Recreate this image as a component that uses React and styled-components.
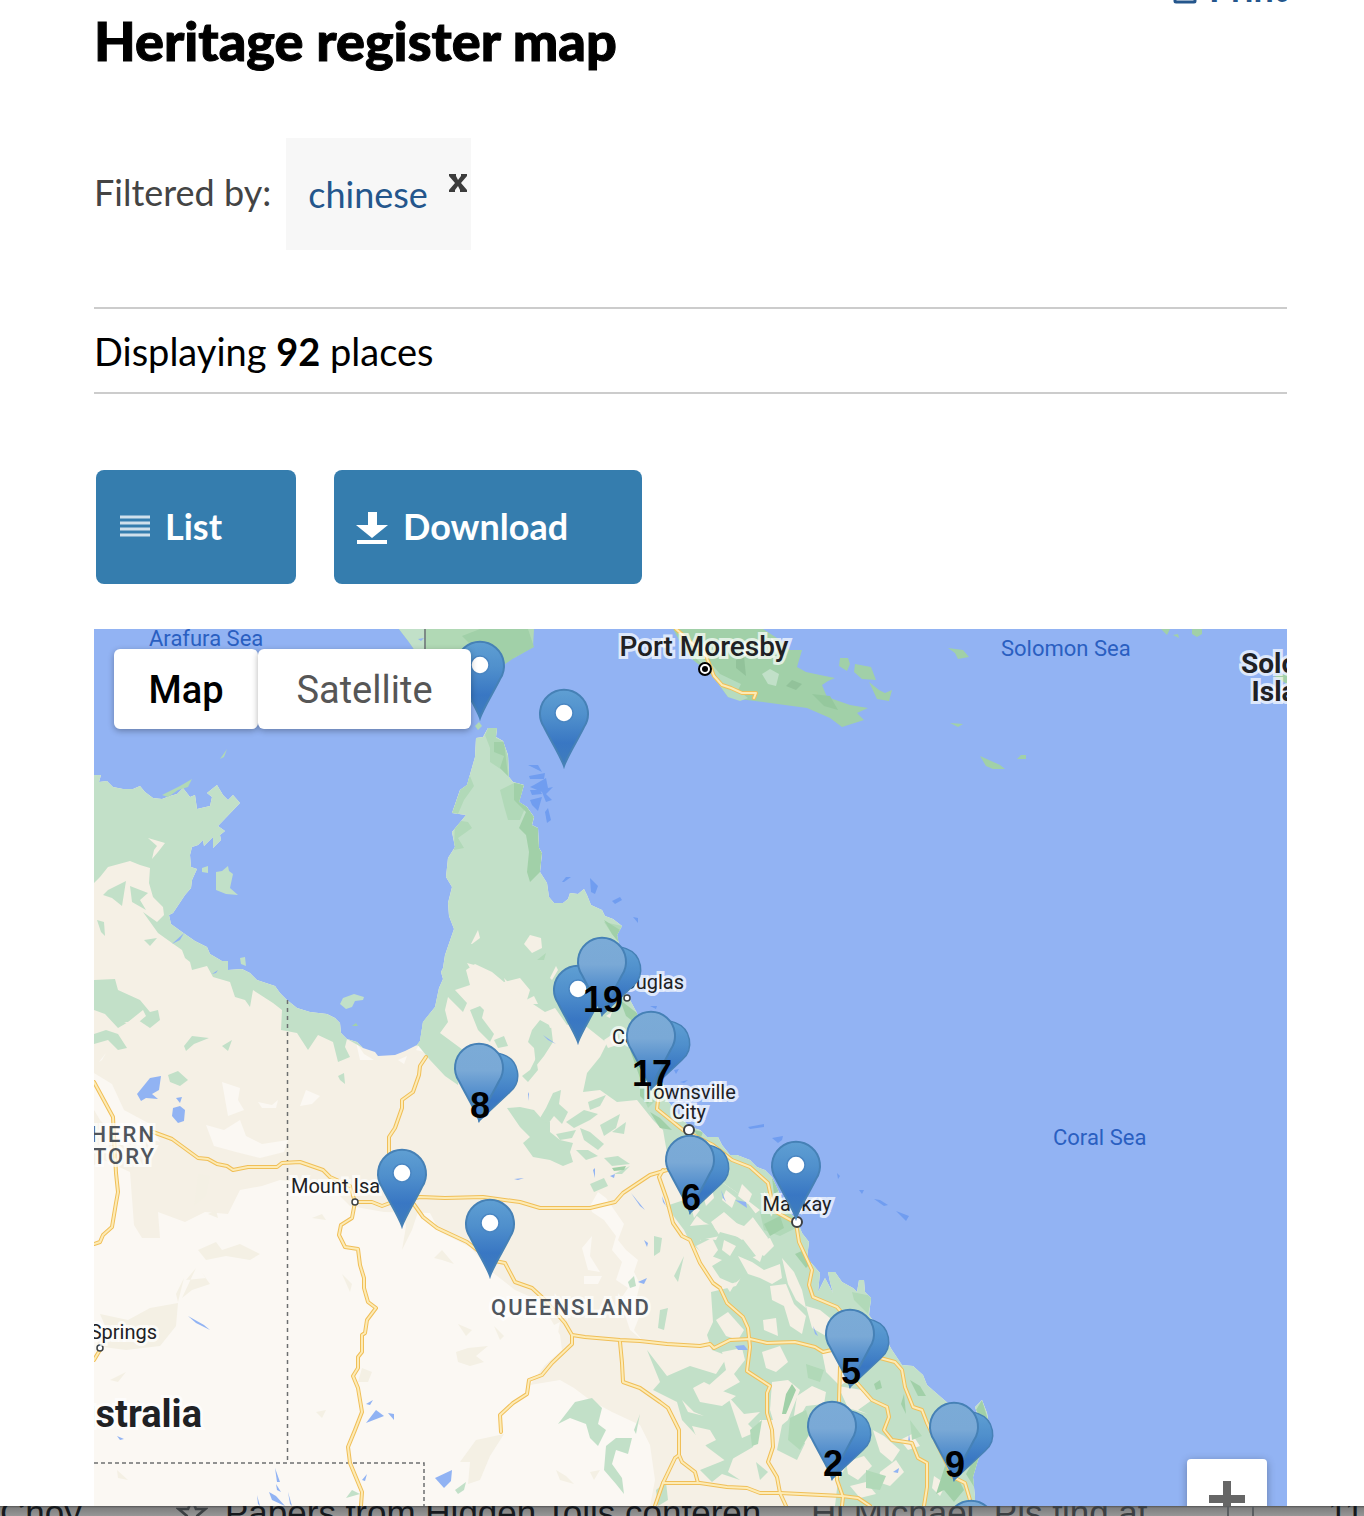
import React, { useState } from "react";
import styled, { createGlobalStyle, css } from "styled-components";

// map data, all in map canvas units

const coast =
  "94,775 101,775 99,782 107,781 113,787 123,789 133,789 140,786 145,792 153,798 162,799 170,796 177,794 183,788 190,797 195,795 197,809 210,806 212,797 207,793 217,785 223,795 228,800 233,795 240,803 218,826 225,831 220,835 221,840 213,848 213,837 204,846 203,840 198,845 192,847 190,855 191,867 197,869 192,880 191,888 185,895 173,913 169,915 171,924 182,932 195,941 207,947 210,954 222,961 228,961 228,970 242,969 250,973 257,980 275,986 280,993 287,1000 297,1008 310,1012 327,1014 335,1018 340,1023 341,1033 347,1039 357,1042 363,1048 375,1052 378,1056 395,1055 405,1051 417,1045 420,1041 423,1022 435,1007 439,988 443,979 441,972 443,968 445,955 454,929 449,916 448,903 452,887 446,877 448,858 455,847 452,832 462,820 466,815 452,813 460,790 467,785 475,757 476,738 483,737 488,728 497,728 496,737 503,741 508,755 509,777 513,782 524,785 519,802 527,807 534,817 532,825 538,828 539,848 542,853 540,872 547,883 549,897 554,903 563,903 568,899 570,893 578,894 584,889 587,895 591,905 602,910 605,916 613,919 622,926 617,935 620,950 630,965 632,980 624,990 630,1000 637,1013 640,1030 645,1060 655,1080 663,1083 667,1100 680,1117 690,1127 700,1130 707,1137 718,1137 722,1145 730,1155 737,1155 750,1160 757,1167 765,1170 772,1177 778,1190 787,1210 797,1220 802,1233 809,1242 807,1258 820,1273 818,1292 825,1278 833,1293 830,1282 828,1272 835,1272 842,1282 853,1288 857,1292 859,1280 864,1280 865,1292 871,1298 869,1315 880,1330 892,1350 902,1365 913,1366 923,1375 927,1385 950,1405 965,1415 977,1413 975,1407 982,1400 987,1413 990,1430 978,1460 973,1477 975,1497 975,1506 94,1506";

const lightLand = [
  "94,1165 104,1160 130,1172 134,1225 142,1238 160,1238 158,1212 185,1222 205,1212 228,1214 240,1190 262,1186 280,1180 330,1186 350,1206 384,1212 430,1213 440,1232 470,1247 492,1272 515,1290 540,1301 560,1335 562,1350 545,1365 530,1385 560,1380 574,1388 590,1400 612,1412 640,1425 650,1445 655,1480 650,1506 94,1506",
  "94,1073 112,1084 124,1110 150,1124 160,1142 140,1136 124,1146 100,1120 94,1110",
  "222,1082 240,1088 238,1100 244,1110 228,1116",
  "258,1102 272,1105 278,1100 276,1108 262,1108",
  "306,1090 320,1096 312,1104 300,1106",
  "590,1206 598,1192 606,1198 624,1224 618,1240 626,1250 638,1260 634,1272 640,1284 636,1300 642,1310 634,1330 642,1340 630,1330 620,1300 628,1288 616,1280 622,1262 612,1250 616,1236 604,1220 592,1212",
  "582,1248 592,1236 590,1256 600,1272 588,1270",
  "584,1276 602,1276 598,1284 584,1284",
  "544,1330 560,1322 556,1344 540,1350 522,1352",
  "206,1125 224,1130 240,1120 246,1136 262,1144 288,1140 284,1152 260,1158 236,1152 214,1146",
  "99,1062 106,1053 102,1060",
  "356,1042 364,1054 374,1060 360,1060",
  "398,1060 407,1056 404,1064",
  "416,1050 428,1030 424,1052",
];

const beigeOnLight = [
  "100,1314 128,1320 150,1308 178,1303 176,1326 160,1346 126,1350 96,1346 106,1328",
  "198,1250 216,1242 222,1250 240,1244 260,1254 250,1260 226,1256 206,1260",
  "186,1280 206,1278 200,1270 210,1284 192,1290 182,1298 196,1268",
  "176,1294 184,1278 178,1302",
  "456,1352 468,1348 488,1346 476,1356 484,1362 470,1366 458,1362",
  "458,1324 472,1330 466,1336",
  "494,1326 504,1336 500,1340",
  "476,1440 504,1434 490,1456 480,1480 468,1484 470,1462 460,1462",
  "434,1258 442,1250 454,1264 442,1260",
  "362,1368 372,1372 368,1382 358,1382",
  "400,1200 420,1206 412,1230 402,1250 406,1226",
  "110,1380 126,1372 118,1382",
  "316,1412 326,1410 322,1418",
  "117,1470 128,1480 118,1478",
  "342,1274 352,1284 350,1292",
  "556,1470 566,1476 574,1484 560,1480",
  "590,1472 600,1470 594,1480",
  "312,1218 322,1214 326,1220",
  "198,1174 210,1176 206,1196 194,1206",
  "208,1214 216,1210 218,1218",
];

const forest = [
  "94,770 245,770 245,780 430,780 430,1045 363,1048 347,1039 345,1047 350,1057 338,1062 333,1042 318,1035 308,1050 297,1033 281,1030 282,1010 273,1003 253,990 250,1007 245,1000 235,997 230,982 213,977 207,966 192,970 190,962 185,958 182,950 172,943 158,933 143,912 157,922 164,915 163,907 153,897 149,883 150,868 140,865 130,861 108,867 100,877 94,883",
  "417,1044 430,1060 445,1076 458,1085 463,1050 440,1033 448,1022 445,1010 448,997 463,1012 467,1003 455,990 470,985 466,970 475,964 492,972 504,982 520,978 530,990 527,1000 545,1012 555,1008 567,1025 578,1020 607,1043 600,1057 587,1073 583,1092 600,1090 617,1102 637,1100 653,1120 663,1130 667,1153 690,1170 722,1182 742,1196 760,1210 752,1216 768,1238 760,1262 745,1252 730,1268 742,1276 736,1286 711,1292 713,1322 707,1335 712,1350 728,1356 716,1374 690,1366 667,1376 647,1350 660,1382 653,1390 677,1402 682,1420 707,1447 727,1462 753,1447 760,1420 783,1420 777,1450 797,1460 810,1433 840,1420 850,1460 838,1480 835,1506 1010,1506 1010,1380 700,900 560,700 440,700 430,900",
  "94,980 115,979 118,990 140,1000 150,1012 158,1010 160,1020 150,1028 135,1018 118,1028 105,1014 94,1010",
  "94,1034 106,1030 118,1034 127,1048 118,1050 108,1040 94,1044",
  "184,1046 192,1036 209,1038 194,1044 186,1051",
  "222,1046 232,1040 228,1051",
  "168,1075 178,1071 188,1080 180,1086 170,1082",
  "108,890 126,881 122,906 112,898 103,895",
  "130,886 148,893 140,900 146,910 132,902",
  "144,940 157,938 150,946",
  "97,920 104,922 105,936 101,932",
  "470,1010 480,1006 484,1010 482,1018 494,1034 490,1042 478,1030",
  "532,1030 540,1020 551,1026 553,1042 544,1056 536,1066 534,1048 528,1042",
  "522,1076 530,1070 536,1058 538,1070 528,1082",
  "507,1108 520,1107 534,1110 541,1118 550,1122 550,1132 560,1140 573,1143 570,1152 573,1162 563,1166 550,1160 533,1157 523,1143 530,1137 520,1127",
  "494,1040 504,1036 508,1046 498,1048",
  "546,1108 553,1093 561,1090 559,1104 568,1112 562,1124 554,1116 548,1124 540,1118",
  "566,1122 584,1110 598,1114 590,1120 574,1128",
  "588,1102 606,1095 600,1106 590,1110",
  "556,1134 576,1130 572,1138 560,1140",
  "580,1128 590,1132 604,1144 598,1150 584,1140",
  "600,1125 620,1114 616,1128 604,1136",
  "612,1132 626,1122 624,1134",
  "576,1150 588,1150 598,1156 586,1160",
  "604,1158 618,1156 630,1164 612,1166",
  "590,1184 604,1178 608,1186 594,1192",
  "614,1174 630,1166 622,1174",
  "666,1206 684,1200 698,1214 690,1226 712,1224 720,1236 700,1240 716,1252 706,1256 690,1242 684,1230",
  "698,1182 716,1178 742,1196 756,1214 744,1226 728,1220 716,1228 704,1222 690,1210 700,1200",
  "700,1238 716,1240 720,1232 742,1238 756,1256 740,1262 744,1276 734,1284 720,1278 712,1266 722,1260 706,1254",
  "654,1236 662,1238 660,1252 654,1256",
  "674,1276 684,1256 678,1282",
  "660,1310 668,1308 664,1330 658,1328",
  "628,1282 634,1276 636,1286 630,1288",
  "558,1424 575,1402 592,1398 602,1408 598,1424 606,1430 598,1446 590,1438 586,1424 570,1418",
  "606,1446 616,1438 632,1438 628,1454 616,1450 612,1464 622,1478 624,1494 616,1484 604,1470",
  "634,1430 640,1414 636,1434",
  "455,1490 466,1482 464,1490 458,1494",
  "346,1498 352,1490 360,1494",
  "656,1490 666,1482 668,1500 658,1506",
  "700,1470 720,1462 734,1456 728,1472 740,1480 722,1474 712,1482",
  "756,1462 768,1472 760,1480",
  "338,1076 344,1073 345,1084 340,1080",
];

// clearings inside the forest
const clearings = [
  "471,944 478,930 480,938 472,944",
  "524,944 530,935 541,938 542,948 532,953",
  "550,978 556,966 558,970 552,980",
  "467,963 478,966 488,976 498,982 488,988 476,978",
  "504,978 516,990 526,1000 534,996 538,1004 520,1004 508,990",
  "548,1022 556,1018 558,1026 550,1028",
  "148,838 165,843 158,852 152,859 154,850 157,846",
  "128,1022 143,1010 146,1016 134,1026 124,1022",
  "604,1040 616,1032 620,1044 608,1048",
  "606,1016 612,1012 610,1018",
  "711,1222 724,1212 740,1226 750,1234 742,1240 730,1232 716,1230",
  "696,1246 712,1238 718,1250 712,1258 704,1256",
  "756,1242 770,1238 774,1246 764,1256 756,1252",
  "738,1256 752,1262 764,1270 780,1264 782,1278 772,1284 760,1278 748,1274",
  "782,1258 794,1272 802,1290 806,1308 796,1300 788,1284",
  "770,1286 786,1284 794,1304 806,1316 802,1334 790,1326 784,1306 772,1300",
  "763,1320 776,1318 778,1336 764,1330",
  "716,1320 728,1312 744,1330 738,1340 726,1336",
  "722,1352 742,1348 745,1360 734,1374 740,1382 722,1392 708,1386 726,1370",
  "762,1352 780,1346 788,1362 776,1372 766,1368",
  "693,1388 704,1382 720,1390 736,1396 722,1406 700,1402",
  "682,1400 694,1412 704,1416 688,1412",
  "772,1382 788,1380 800,1390 788,1420 776,1430 770,1410",
  "797,1396 812,1386 826,1392 824,1404 806,1406 798,1420 792,1428",
  "692,1426 710,1430 716,1440 704,1446 696,1436",
  "728,1396 744,1414 760,1412 748,1424 756,1432 742,1438",
  "822,1352 834,1350 842,1366 848,1380 840,1386 826,1372",
  "838,1386 862,1390 872,1400 858,1410 868,1414 848,1408",
  "800,1420 816,1414 826,1430 810,1446 800,1440",
  "806,1306 820,1310 830,1318 826,1336 812,1328",
  "846,1462 864,1456 872,1466 858,1480 848,1474",
  "873,1430 884,1436 900,1450 892,1462 880,1452",
  "880,1472 896,1460 904,1472 890,1486 878,1482",
  "850,1486 866,1482 876,1494 860,1498",
  "742,1184 752,1194 748,1204 738,1196",
  "764,1192 772,1200 766,1208",
  "726,1190 736,1198 732,1208 722,1200",
  "702,1192 712,1188 714,1198 706,1206",
  "690,1202 700,1210 694,1218",
  "724,1240 736,1246 730,1256 722,1250",
  "726,1286 736,1282 730,1292",
  "790,1300 796,1312 790,1316",
  "900,1440 912,1434 920,1446 908,1450",
  "934,1476 946,1484 940,1496 932,1488",
  "454,1024 466,1018 470,1026 460,1032",
];

const denseForest = [
  "485,735 488,728 497,728 496,738 504,742 508,758 509,777 502,770 490,762 490,748",
  "452,813 462,785 470,776 474,786 464,800 458,814",
  "455,820 468,822 472,828 458,838 464,848 454,850",
  "500,790 520,780 526,806 520,820 508,820 504,806",
  "604,922 622,926 617,940 612,934",
  "537,960 546,953 544,960 534,960",
  "640,1090 656,1084 660,1096 648,1108",
  "760,1212 790,1208 800,1226 780,1236 764,1230",
  "806,1364 824,1370 820,1382 808,1378",
  "790,1418 806,1410 812,1430 800,1450 788,1440",
  "866,1470 886,1476 880,1490 866,1488",
  "750,1430 762,1420 758,1444 752,1446",
  "910,1420 922,1436 912,1440",
  "852,1292 872,1296 868,1314 854,1300",
];

const parks = [
  "514,783 524,785 520,802 527,807 534,817 532,825 538,828 539,848 542,853 540,872 530,882 527,872 529,852 526,835 519,828 526,812 514,800",
  "494,742 504,742 508,776 500,768 504,756 494,752",
  "604,920 612,934 620,944 620,930",
  "620,1000 637,1013 644,1030 626,1016",
  "630,1050 645,1062 656,1088 648,1104 640,1096 640,1078",
  "650,1112 660,1118 672,1130 660,1128",
  "694,1130 703,1132 700,1140",
  "612,1168 626,1166 624,1170 614,1171",
  "772,1178 780,1190 774,1194",
  "764,1224 780,1216 784,1228 770,1236",
  "795,1254 804,1250 812,1262 806,1268",
  "786,1394 792,1384 796,1390 786,1414 782,1414",
  "874,1384 880,1380 882,1388 876,1390",
  "901,1404 904,1394 906,1414",
  "910,1380 920,1386 926,1396 918,1396",
  "945,1466 956,1474 964,1490 954,1502 944,1490 936,1494",
  "976,1410 982,1400 988,1420 980,1416",
  "978,1452 990,1446 976,1490 966,1474",
];

const islands = [
  { c: "#b1d9b5", p: "399,629 534,629 533,647 514,658 470,664 418,655 409,642" },
  { c: "#c1e0c8", p: "399,629 424,629 424,656 418,655 409,642" },
  { c: "#a1d0a8", p: "480,629 528,629 534,647 514,658 505,664 498,650 470,644 462,636" },
  { c: "#a1d0a8", p: "673,629 763,629 780,640 790,650 802,650 797,667 806,672 820,675 835,678 828,681 822,685 827,697 850,705 868,708 857,713 864,720 842,727 830,718 807,708 763,702 747,700 728,697 712,675 693,660 683,647" },
  { c: "#b6dcbf", p: "693,655 710,662 720,674 741,684 738,690 748,698 740,701 728,697 712,675" },
  { c: "#c1e0c8", p: "762,674 770,669 779,674 776,686 768,684" },
  { c: "#92c29a", p: "786,686 792,680 802,684 796,690" },
  { c: "#92c29a", p: "736,660 744,656 746,676 736,668" },
  { c: "#95c89d", p: "812,694 830,696 838,710 824,706" },
  { c: "#a1d0a8", p: "840,658 848,658 850,664 847,671 839,666" },
  { c: "#a1d0a8", p: "855,664 871,667 876,680 862,679 854,672" },
  { c: "#a1d0a8", p: "869,682 879,690 885,693 892,690 889,701 877,699" },
  { c: "#a1d0a8", p: "948,648 963,650 969,657 958,659 955,653" },
  { c: "#a1d0a8", p: "980,756 1000,765 1005,769 993,769 986,766" },
  { c: "#a1d0a8", p: "1017,759 1021,755 1026,755 1026,759" },
  { c: "#a1d0a8", p: "950,723 963,724 958,727" },
  { c: "#a1d0a8", p: "1161,629 1170,629 1167,635" },
  { c: "#a1d0a8", p: "1173,635 1178,634 1179,638" },
  { c: "#a1d0a8", p: "1192,629 1202,629 1202,634 1197,637 1192,634" },
  { c: "#a1d0a8", p: "1274,676 1287,674 1287,684" },
  { c: "#b1d9b5", p: "220,759 227,749 224,757" },
  { c: "#b1d9b5", p: "162,795 180,786 192,779 188,787 178,790 168,797" },
  { c: "#c1e0c8", p: "216,872 222,871 228,866 229,871 233,874 230,888 238,895 226,894 216,890" },
  { c: "#c1e0c8", p: "202,868 208,866 208,873 202,872" },
  { c: "#c1e0c8", p: "340,1004 343,998 354,994 364,997 363,1000 355,1001 352,1007 346,1009" },
  { c: "#c1e0c8", p: "240,958 245,957 246,966 241,964" },
  { c: "#a1d0a8", p: "352,1026 356,1023 358,1026" },
  { c: "#b1d9b5", p: "475,726 479,722 482,726 478,730" },
];

const lakes = [
  "137,1094 150,1078 161,1076 159,1090 152,1094 158,1099 146,1098 141,1101",
  "173,1108 180,1106 185,1110 184,1121 178,1123 172,1116",
  "176,1098 182,1097 180,1103",
  "188,1316 204,1325 210,1330 196,1323",
  "117,1436 124,1439 120,1440",
  "140,1442 150,1452 146,1448",
  "366,1423 376,1410 384,1416",
  "366,1404 373,1400 370,1405",
  "388,1413 394,1414 394,1420",
  "275,1468 280,1482 277,1482",
  "276,1484 281,1492 277,1490",
  "269,1492 276,1496 285,1506 272,1500",
  "288,1492 292,1506 290,1504",
  "257,1495 260,1506 258,1504",
  "362,1480 367,1474 365,1481",
  "435,1478 452,1470 451,1481 444,1488",
  "172,944 184,933 180,940",
  "212,974 218,970 216,973",
  "514,1179 524,1178 518,1180",
  "528,1094 529,1092 529,1101",
  "543,1035 556,1044 548,1040",
  "631,1193 645,1210 640,1206",
  "593,1170 595,1168 595,1178",
  "610,1176 615,1174 614,1178",
  "644,1240 648,1243 647,1247",
  "638,1282 647,1278 644,1284",
  "735,1346 744,1345 748,1350 738,1350",
  "813,1326 818,1336 815,1334",
  "662,1196 666,1206 663,1202",
  "721,1190 726,1202 723,1198",
  "735,1200 746,1202 747,1208",
  "893,1472 899,1468 898,1473",
  "909,1434 911,1446 908,1442",
  "418,639 424,638 421,641",
];

const reefs = [
  "528,765 538,765 542,772",
  "529,776 540,774 545,773 544,779 530,779",
  "534,785 546,778 548,788 553,787 546,794 552,800 546,802 542,792 530,787",
  "530,790 540,790 542,794 532,795",
  "530,800 542,797 540,804 538,811 532,805",
  "545,812 548,808 551,820 547,823",
  "562,882 566,877 571,877 564,882",
  "590,878 598,886 595,894 591,892",
  "612,901 620,897 622,900 615,904",
  "633,917 638,918 638,923",
  "650,1006 657,1006 656,1009",
  "748,1127 764,1124 764,1127 750,1129",
  "772,1138 783,1136 782,1140 778,1143",
  "837,1173 840,1176 838,1179",
  "859,1190 864,1190 862,1194",
  "874,1199 880,1200 888,1205 884,1206",
  "896,1211 909,1216 906,1221",
  "674,1070 679,1069 676,1074",
  "680,1082 688,1080 684,1083",
];

const roads = [
  "426,1057 420,1066 419,1075 413,1092 402,1100 402,1108 395,1128 389,1137 389,1170 396,1200",
  "94,1082 113,1117 114,1137 116,1173 118,1192 116,1203 112,1227 103,1235 100,1242 94,1244",
  "153,1132 172,1139 198,1158 208,1159 217,1164 227,1166 233,1170 248,1167 277,1167 282,1163 300,1162 323,1170 330,1177 350,1186 355,1202 372,1202 382,1206 390,1203 420,1197 445,1198 483,1197 520,1202 540,1208 590,1208 615,1202 623,1193 650,1175 667,1170",
  "355,1202 352,1218 341,1225 339,1235 345,1247 358,1249 360,1265 364,1278 364,1288 368,1302 376,1308 367,1320 365,1333 362,1335 362,1352 358,1357 358,1368 353,1376 358,1388 362,1412 355,1430 348,1447 350,1463 362,1492 361,1506",
  "413,1203 423,1217 437,1228 467,1242 490,1260 505,1263 515,1282 532,1288 545,1300 565,1323 572,1335 585,1337 620,1340 640,1341 667,1344 700,1346 710,1344 714,1348 730,1340 750,1339 767,1343 795,1342 815,1347 823,1352 836,1349",
  "572,1335 572,1344 552,1363 542,1375 529,1380 527,1394 513,1403 500,1415 501,1432",
  "620,1342 622,1363 623,1382 640,1388 660,1402 668,1408 679,1430 679,1455 682,1462 695,1472 698,1483",
  "679,1455 675,1458 663,1483 655,1506",
  "663,1483 700,1483 727,1487 747,1488 760,1493 780,1493 842,1496 858,1498 870,1506",
  "663,1170 659,1177 667,1200 673,1223 682,1236 690,1240 700,1263 713,1283 720,1288 727,1303 743,1317 748,1328 750,1347 747,1371 770,1386 767,1393 767,1413 772,1430 773,1447 768,1462 777,1477 780,1493 786,1506",
  "663,1090 658,1100 657,1109 683,1130 713,1145 732,1160 750,1167 768,1183 771,1197 776,1212 787,1218 796,1223 799,1242 812,1270 809,1285 813,1297 837,1307 880,1358 895,1362 902,1370 905,1387 913,1407 922,1410 927,1423 953,1477 965,1483 970,1500",
  "840,1367 839,1400 837,1480 843,1497 842,1506",
  "857,1383 872,1400 887,1407 889,1417 884,1430 892,1440 912,1443 918,1458 927,1463 927,1487 924,1506",
  "676,629 684,636 706,656 714,676 722,685 731,688 742,693 756,693 754,698",
  "94,1360 100,1350",
];

const towns = [
  { x: 355, y: 1202, r: 3 },
  { x: 100, y: 1348, r: 3 },
  { x: 627, y: 998, r: 3 },
  { x: 689, y: 1130, r: 5 },
  { x: 797, y: 1222, r: 5 },
];

const labels = [
  { x: 149, y: 639, kind: "sea", text: "Arafura Sea" },
  { x: 1001, y: 649, kind: "sea", text: "Solomon Sea" },
  { x: 1053, y: 1138, kind: "sea", text: "Coral Sea" },
  { x: 704, y: 647, kind: "capital", text: "Port Moresby", align: "center" },
  { x: 1297, y: 678, kind: "country", text: "Solomon\nIslands", align: "center" },
  { x: 202, y: 1414, kind: "nation", text: "Australia", align: "end" },
  { x: 156, y: 1146, kind: "state", text: "NORTHERN\nTERRITORY", align: "end" },
  { x: 491, y: 1308, kind: "state", text: "QUEENSLAND" },
  { x: 684, y: 982, kind: "town", text: "Port Douglas", align: "end" },
  { x: 612, y: 1037, kind: "town", text: "Cairns" },
  { x: 689, y: 1102, kind: "town", text: "Townsville\nCity", align: "center" },
  { x: 797, y: 1204, kind: "town", text: "Mackay", align: "center" },
  { x: 291, y: 1186, kind: "town", text: "Mount Isa" },
  { x: 157, y: 1332, kind: "town", text: "Alice Springs", align: "end" },
];

const places = [
  { x: 480, y: 640 },
  { x: 564, y: 688 },
  { x: 578, y: 964 },
  { x: 602, y: 936, cluster: true, count: 19 },
  { x: 651, y: 1010, cluster: true, count: 17 },
  { x: 479, y: 1042, cluster: true, count: 8 },
  { x: 402, y: 1148 },
  { x: 490, y: 1198 },
  { x: 690, y: 1134, cluster: true, count: 6 },
  { x: 796, y: 1140 },
  { x: 850, y: 1308, cluster: true, count: 5 },
  { x: 832, y: 1400, cluster: true, count: 2 },
  { x: 954, y: 1401, cluster: true, count: 9 },
  { x: 971, y: 1499, cluster: true },
];

const Shapes = ({ list, fill }) => (
  <g fill={fill}>
    {list.map((points, index) => (
      <polygon key={index} points={points} />
    ))}
  </g>
);

const Terrain = () => (
  <Canvas viewBox="94 629 1193 877" aria-hidden="true">
    <clipPath id="land">
      <polygon points={coast} />
    </clipPath>
    <polygon points={coast} fill="#f5f0e5" />
    <g clipPath="url(#land)">
      <Shapes list={lightLand} fill="#fbf8f3" />
      <Shapes list={beigeOnLight} fill="#f4f0e4" />
      <Shapes list={forest} fill="#c2e0c8" />
      <Shapes list={clearings} fill="#f5f0e5" />
      <Shapes list={denseForest} fill="#b1d9b8" />
      <Shapes list={parks} fill="#a1d0a8" />
    </g>
    {islands.map((island, index) => (
      <polygon key={index} points={island.p} fill={island.c} />
    ))}
    <Shapes list={lakes} fill="#91b3f3" />
    <Shapes list={reefs} fill="#709df0" />

    {/* borders */}
    <path d="M425 629V660" stroke="#7d8a86" strokeWidth="2" />
    <g fill="none" stroke="#6d6f70">
      <path d="M287.500 1000V1463" strokeDasharray="4 4" strokeWidth="1.500" />
      <path d="M94 1463H424V1506" strokeDasharray="4 3" strokeWidth="1.500" />
    </g>

    <g fill="none" strokeLinejoin="round" strokeLinecap="round">
      {roads.map((points) => (
        <polyline key={points} points={points} stroke="#f0bf58" strokeWidth="4" />
      ))}
      {roads.map((points) => (
        <polyline key={points} points={points} stroke="#fdebb5" strokeWidth="2" />
      ))}
    </g>

    {towns.map((town) => (
      <circle
        key={town.x}
        cx={town.x}
        cy={town.y}
        r={town.r}
        fill="#fff"
        stroke="#3c4043"
        strokeWidth={town.r > 3 ? 2 : 1.5}
      />
    ))}
    <circle cx="705" cy="669" r="6" fill="#fff" stroke="#000" strokeWidth="2" />
    <circle cx="705" cy="669" r="3" />
  </Canvas>
);

const PinArt = ({ cluster }) => (
  <svg width="68" height="82" viewBox="0 0 68 82" aria-hidden="true">
    <defs>
      <linearGradient id="pin" x1="0" y1="0" x2="0" y2="1">
        <stop offset="0" stopColor="#5f9fd3" />
        <stop offset="0.350" stopColor="#4f8fcc" />
        <stop offset="0.700" stopColor="#3977c3" />
        <stop offset="1" stopColor="#3f7dbd" />
      </linearGradient>
      <linearGradient id="cluster" x1="0" y1="0" x2="0" y2="1">
        <stop offset="0" stopColor="#7babd7" />
        <stop offset="0.350" stopColor="#7aa9d6" />
        <stop offset="0.700" stopColor="#4d8acb" />
        <stop offset="1" stopColor="#3a78c2" />
      </linearGradient>
    </defs>
    {cluster && (
      <path
        d="M25 79L56 50A22 22 0 1 0 20 37Z"
        fill="url(#pin)"
        stroke="#4681b6"
        strokeWidth="1.500"
      />
    )}
    <path
      d="M25 79C22 70 12 54 5 40A24 24 0 1 1 45 40C38 54 28 70 25 79Z"
      transform="translate(0 -1)"
      fill={cluster ? "url(#cluster)" : "url(#pin)"}
      stroke="#4681b6"
      strokeWidth="2"
    />
    {!cluster && (
      <circle cx="25" cy="25" r="9" fill="#fff" stroke="#4a86c2" strokeWidth="1.500" />
    )}
  </svg>
);

const HeritageMap = () => {
  const [type, setType] = useState("Map");

  return (
    <MapFrame>
      <Terrain />
      {labels.map((label) => (
        <Label key={label.text} $x={label.x} $y={label.y} $kind={label.kind} $align={label.align}>
          {label.text}
        </Label>
      ))}
      {places.map((place) => (
        <Pin key={place.x} $x={place.x} $y={place.y}>
          <PinArt cluster={place.cluster} />
          {place.count && <Count>{place.count}</Count>}
        </Pin>
      ))}
      <MapTypes>
        {["Map", "Satellite"].map((name) => (
          <MapType key={name} $active={type === name} onClick={() => setType(name)}>
            {name}
          </MapType>
        ))}
      </MapTypes>
      <ZoomIn aria-label="Zoom in">
        <svg width="36" height="36" viewBox="0 0 36 36">
          <path d="M18 0V36M0 18H36" stroke="#666" strokeWidth="8" />
        </svg>
      </ZoomIn>
    </MapFrame>
  );
};

const App = () => {
  return (
    <>
      <GlobalStyle />
      <Page>
        <PrintBar>
          <PrintLink href="#print">
            <svg width="24" height="24" viewBox="0 0 24 24" fill="none">
              <path d="M2 0V21Q2 22 3 22H21Q22 22 22 21V0" stroke="#24568c" strokeWidth="3" />
            </svg>
            Print
          </PrintLink>
        </PrintBar>
        <Title>Heritage register map</Title>
        <Filters>
          <FilterName>Filtered by:</FilterName>
          <Chip>
            <a href="#chinese">chinese</a>
            <Remove aria-label="Remove chinese">
              <svg width="18" height="18" viewBox="0 0 18 18">
                <path
                  d="M0 0H7V2L9 6L12 2V0H18V2L12 9L18 16V18H11V16L9 12L6 16V18H0V16L6 9L0 2Z"
                  fill="#3c3c3c"
                />
              </svg>
            </Remove>
          </Chip>
        </Filters>
        <Results>
          Displaying <strong>92</strong> places
        </Results>
        <Actions>
          <Action>
            <svg width="32" height="32" viewBox="0 0 32 32">
              <path d="M1 7H31M1 13H31M1 19H31M1 25H31" stroke="#cfe0ec" strokeWidth="3" />
            </svg>
            List
          </Action>
          <Action>
            <svg width="32" height="32" viewBox="0 0 32 32" fill="#fff">
              <path d="M11 2H20V15H31L15 28L-1 15H11ZM0 30H30V34H0Z" />
            </svg>
            Download
          </Action>
        </Actions>
        <HeritageMap />
      </Page>
      <MailRow>
        <span>Choy</span>
        <svg width="32" height="32" viewBox="0 0 24 24" fill="none" stroke="#3c4043" strokeWidth="2">
          <path d="M12 2L15 9H22L16 14L18 21L12 17L6 21L8 14L2 9H9Z" />
        </svg>
        <span>Papers from Hidden Tolls conferen</span>
        <Snippet>Hi Michael, Pls find at</Snippet>
        <Divider />
        <Divider />
        <time>11</time>
      </MailRow>
    </>
  );
};

const GlobalStyle = createGlobalStyle`
  * {
    box-sizing: border-box;
  }

  body {
    margin: 0;
    background: #fff;
    font-family: "Lato", sans-serif;
    font-size: 36px;
    line-height: 44px;
    color: #000;
  }

  button {
    border: none;
    padding: 0;
    font: inherit;
    cursor: pointer;
  }

  a {
    color: #24568c;
    text-decoration: none;
  }
`;

const Page = styled.main`
  padding: 0 77px 0 94px;
`;

const PrintBar = styled.div`
  height: 8px;
  display: flex;
  justify-content: flex-end;
  align-items: flex-end;
  overflow: hidden;
`;

const PrintLink = styled.a`
  margin-bottom: -2px;
  display: flex;
  align-items: flex-end;
  gap: 12px;
  font-weight: 700;
  svg {
    margin-bottom: 6px;
  }
`;

const Title = styled.h1`
  margin: 0;
  padding-top: 2px;
  font-size: 54px;
  line-height: 62px;
  font-weight: 900;
  -webkit-text-stroke: 1px #000;
`;

const Filters = styled.div`
  margin-top: 66px;
  display: flex;
  align-items: center;
  gap: 15px;
`;

const FilterName = styled.span`
  padding-bottom: 4px;
  color: #444;
`;

const Chip = styled.div`
  height: 112px;
  padding: 0 4px 0 22px;
  display: flex;
  align-items: center;
  gap: 21px;
  background: #f7f7f7;
`;

const Remove = styled.button`
  display: flex;
  padding-bottom: 22px;
  background: none;
`;

const Results = styled.div`
  margin-top: 57px;
  padding: 20px 0 19px;
  border: solid #ccc;
  border-width: 2px 0;
  font-size: 38px;
  strong {
    font-weight: 700;
  }
`;

const Actions = styled.div`
  margin: 76px 2px 45px;
  display: flex;
  gap: 38px;
`;

const Action = styled.button`
  height: 114px;
  padding: 0 74px 2px 23px;
  display: flex;
  align-items: center;
  gap: 14px;
  border-radius: 8px;
  background: #357dae;
  color: #fff;
  font-weight: 700;
  svg {
    overflow: visible;
  }
`;

const MapFrame = styled.section`
  position: relative;
  height: 877px;
  overflow: hidden;
  background: #92b3f3;
  font-family: "Roboto", sans-serif;
`;

const Canvas = styled.svg`
  display: block;
  width: 1193px;
  height: 877px;
`;

const labelKinds = {
  sea: css`
    font-size: 22px;
    color: #2a5fc1;
  `,
  town: css`
    font-size: 20px;
    line-height: 20px;
    color: #202124;
  `,
  capital: css`
    font-size: 28px;
    font-weight: 500;
    color: #202124;
  `,
  country: css`
    font-size: 28px;
    line-height: 28px;
    font-weight: 700;
    color: #202124;
  `,
  nation: css`
    font-size: 38px;
    font-weight: 700;
    color: #202124;
  `,
  state: css`
    font-size: 22px;
    line-height: 22px;
    font-weight: 500;
    letter-spacing: 2px;
    color: #50555c;
  `,
};

const shift = { center: "-50%", end: "-100%" };

const Label = styled.span`
  position: absolute;
  left: ${(props) => props.$x - 94}px;
  top: ${(props) => props.$y - 629}px;
  transform: translate(${(props) => shift[props.$align] || "0"}, -50%);
  text-align: ${(props) => props.$align || "start"};
  white-space: pre;
  ${(props) =>
    props.$kind !== "sea" &&
    css`
      paint-order: stroke fill;
      -webkit-text-stroke: 6px rgba(255, 255, 255, 0.7);
    `}
  ${(props) => labelKinds[props.$kind]}
`;

const Pin = styled.button`
  position: absolute;
  left: ${(props) => props.$x - 94 - 25}px;
  top: ${(props) => props.$y - 629}px;
  width: 50px;
  height: 82px;
  background: none;
  svg {
    display: block;
    overflow: visible;
  }
`;

const Count = styled.span`
  position: absolute;
  left: 0;
  top: 42px;
  width: 52px;
  text-align: center;
  font-family: "Liberation Sans", sans-serif;
  font-weight: 700;
  color: #000;
`;

const MapTypes = styled.div`
  position: absolute;
  left: 20px;
  top: 20px;
  display: grid;
  grid-template-columns: 144px 213px;
`;

const MapType = styled.button`
  height: 80px;
  padding-top: 2px;
  border-radius: 6px;
  background: #fff;
  box-shadow: 0 2px 6px rgba(0, 0, 0, 0.3);
  color: ${(props) => (props.$active ? "#000" : "#565656")};
  font-size: 38px;
  font-weight: ${(props) => (props.$active ? 500 : 400)};
`;

const ZoomIn = styled.button`
  position: absolute;
  right: 20px;
  top: 830px;
  width: 80px;
  height: 80px;
  display: flex;
  align-items: center;
  justify-content: center;
  border-radius: 4px;
  background: #fff;
  box-shadow: 0 2px 8px rgba(0, 0, 0, 0.3);
`;

const MailRow = styled.footer`
  height: 10px;
  display: grid;
  grid-template-columns: 176px 49px 586px 1fr 25px 76px 36px;
  grid-template-rows: 14px;
  align-items: center;
  overflow: hidden;
  background: linear-gradient(#555 0, #7f7f7f 2px, #969696 10px);
  font-family: "Liberation Sans", sans-serif;
  font-size: 35px;
  line-height: 14px;
  color: #16191d;
  white-space: nowrap;
`;

const Snippet = styled.span`
  color: #3c4043;
`;

const Divider = styled.span`
  width: 2px;
  height: 14px;
  background: #5b5e61;
`;

export default App;
